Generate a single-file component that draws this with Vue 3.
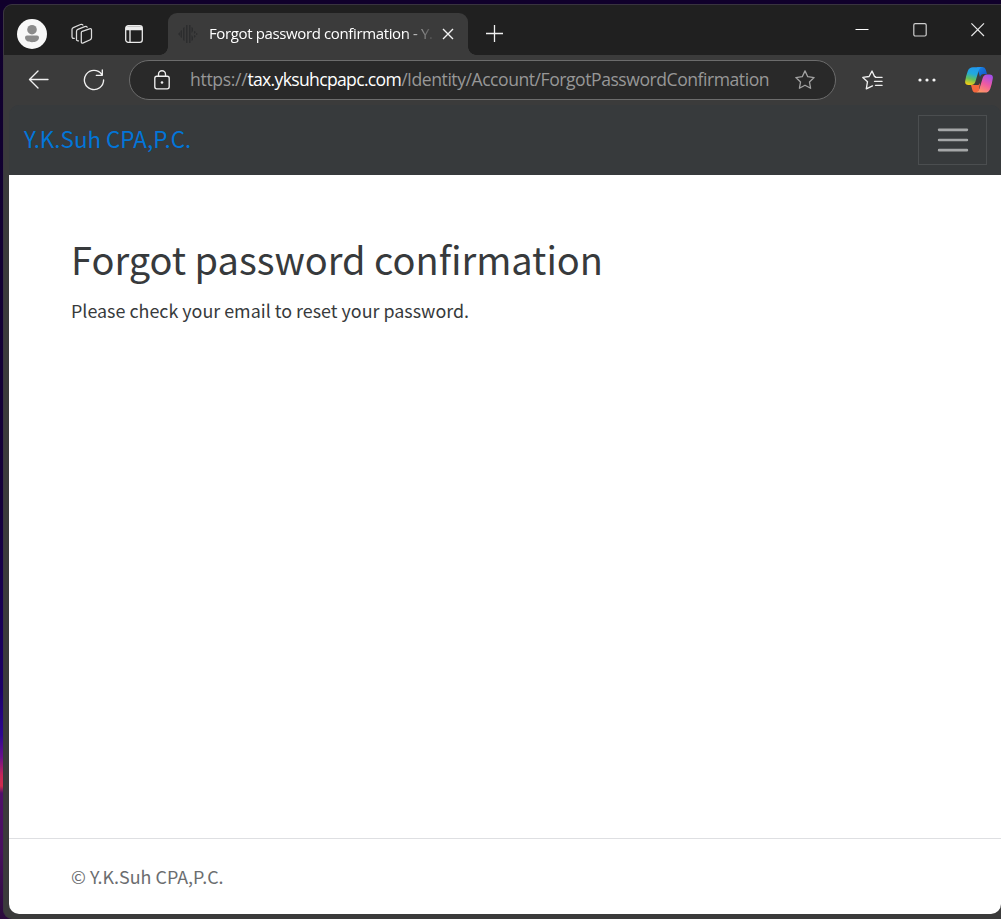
<script setup>
const title = 'Forgot password confirmation'
const company = 'Y.K.Suh CPA,P.C.'
</script>

<template>
  <div class="desktop">
    <div class="window">
      <header class="tabs">
        <svg class="avatar" width="30" height="30" viewBox="0 0 30 30">
          <circle cx="15" cy="15" r="15" fill="#f8f8f8" />
          <circle cx="15" cy="10.7" r="4.8" fill="#8b8b8b" />
          <path d="M10 16.600h10a2 2 0 0 1 2 2c0 3-3 4.700-7 4.700s-7-1.700-7-4.700a2 2 0 0 1 2-2z" fill="#8b8b8b" />
        </svg>
        <svg class="workspaces" width="22" height="22" viewBox="0 0 22 22" fill="none" stroke="#dcdcdc" stroke-width="1.25" stroke-linejoin="round" stroke-linecap="round">
          <path d="M11.200 8.300 18.500 5.800q2-.6 2 1.200v7.800q0 1.400-1.200 1.900l-7 3.200q-2 .8-2-1.200V9.800q0-1.100.9-1.500z" />
          <path d="M7.500 17.800q-2 .3-2-1.400V8.500q0-1.600 1.400-2.200l6.800-2.700q1.800-.7 2.500.6" />
          <path d="M3.300 15.300q-2.300.4-2.300-1.500V6.600q0-1.400 1.300-2L9.500 1.500q1.700-.6 2.400.5" />
        </svg>
        <svg class="panel" width="18" height="18" viewBox="0 0 18 18" fill="none" stroke="#ececec" stroke-width="1.300">
          <rect x=".7" y=".7" width="16.600" height="16.600" rx="2.600" />
          <path d="M1 2.500h16M1 4h16" stroke-width="2.400" />
          <path d="M5 4v13" />
        </svg>
        <div class="tab">
          <svg class="favicon" width="20" height="20" viewBox="0 0 20 20" fill="#2c2d2e">
            <path d="M8 1h1.500v18H8zM11 1h1.500v18H11zM5 4l1.500-1v14L5 16zM13.500 3 15 4v3l-1.500 2zM13.500 11 15 13v3l-1.500 1zM0 10l2-2v4zM2.500 7 4 6v8l-1.500-1zM16 7l2 1-2 2zM16 11l2 1-2 2zM18 9l2 1-2 1z" />
          </svg>
          <span class="tab-title">{{ title }} - Y.</span>
          <svg class="tab-close" width="12" height="12" viewBox="0 0 12 12" stroke="#f4f4f4" stroke-width="1.350"><path d="M1 1l10 10M11 1 1 11" /></svg>
        </div>
        <svg class="new-tab" width="18" height="18" viewBox="0 0 18 18" stroke="#f0f0f0" stroke-width="1.300"><path d="M8.500 0v17M0 8.500h17" /></svg>
        <div class="controls">
          <svg width="14" height="14" viewBox="0 0 14 14" stroke="#fff"><path d="M.5 6.500h13" /></svg>
          <svg width="14" height="14" viewBox="0 0 14 14" fill="none" stroke="#cfcfcf" stroke-width="1.200"><rect x=".8" y=".6" width="12.400" height="12.400" rx="1.500" /></svg>
          <svg width="14" height="14" viewBox="0 0 14 14" stroke="#e4e4e4" stroke-width="1.200"><path d="M.4.4l12.600 12.600M13 .4.4 13" /></svg>
        </div>
      </header>

      <div class="toolbar">
        <svg class="back" width="21" height="20" viewBox="0 0 21 20" fill="none" stroke="#f0f0f0" stroke-width="1.350" stroke-linecap="round" stroke-linejoin="round"><path d="M10 1 1.500 9.500l8.500 8.500M1.500 9.500H20" /></svg>
        <svg class="reload" width="22" height="22" viewBox="0 0 22 22" fill="none" stroke="#f0f0f0" stroke-width="1.350" stroke-linecap="round" stroke-linejoin="round"><path d="M18.700 5.300A9.600 9.600 0 1 0 20.600 11M19.300 1v5.300h-6" /></svg>
        <div class="address">
          <svg class="lock" width="16" height="20" viewBox="0 0 16 20" fill="none" stroke="#efefef" stroke-width="1.350"><rect x=".8" y="6.200" width="14.400" height="12.600" rx="2" /><path d="M4.500 6V4.200a3.500 3.500 0 0 1 7 0V6" /><circle cx="8" cy="12.500" r="1.300" fill="#efefef" stroke="none" /></svg>
          <span class="url">https://<b>tax.yksuhcpapc.com</b><span class="path">/Identity/Account/ForgotPasswordConfirmation</span></span>
          <svg class="star" width="20" height="20" viewBox="0 0 20 20" fill="none" stroke="#a2a2a2" stroke-width="1.300" stroke-linejoin="round"><path d="m10 .9 2.750 5.800 6.350.85-4.650 4.400 1.150 6.350L10 15.250 4.400 18.300l1.150-6.350L.9 7.550l6.350-.85z" /></svg>
        </div>
        <svg class="favorites" width="21" height="20" viewBox="0 0 21 20" fill="none" stroke="#eee" stroke-width="1.350" stroke-linejoin="round" stroke-linecap="round"><path d="M13.400 6.700l-.8-.1L10 1 7.100 6.500.8 7.400l4.700 4.300-1.200 7.200 6.200-3M13.500 7.300h6.600M12.500 11.300h7.600M13.500 15.300h6.600" /></svg>
        <svg class="more" width="18" height="4" viewBox="0 0 18 4" fill="#f4f4f4"><circle cx="2" cy="2" r="1.600" /><circle cx="9" cy="2" r="1.600" /><circle cx="16" cy="2" r="1.600" /></svg>
        <svg class="copilot" width="28" height="26" viewBox="0 0 28 26">
          <defs>
            <linearGradient id="cool" x1=".6" y1="0" x2=".35" y2="1"><stop offset="0" stop-color="#2198ee" /><stop offset=".38" stop-color="#22a9dc" /><stop offset=".68" stop-color="#62bf5c" /><stop offset="1" stop-color="#f2cc14" /></linearGradient>
            <linearGradient id="warm" x1=".7" y1="0" x2=".25" y2="1"><stop offset="0" stop-color="#a44eea" /><stop offset=".5" stop-color="#f05ba1" /><stop offset="1" stop-color="#ff9a62" /></linearGradient>
            <linearGradient id="fold" x1="0" y1="0" x2="1" y2="1"><stop offset="0" stop-color="#1788e8" /><stop offset="1" stop-color="#1551c5" /></linearGradient>
          </defs>
          <path d="M12 0h5.500q2.500 0 3.300 2.700L22 7h-3.500q-2.500 0-3.500 3z" fill="url(#fold)" />
          <path d="M6 18h7.500l1.500-2-1 7q-.6 2.600-3 2.600-3 0-3.800-3.200z" fill="#f4673d" />
          <path d="M8 .3h9q-2.500.4-3.500 4L10.300 15q-1 3-4.200 3H3.500Q-.4 18 .2 14q.7-5 2.600-10 1.500-3.700 5.200-3.700z" fill="url(#cool)" />
          <path d="M20 25.600h-9q2.500-.4 3.500-4L17.700 11q1-3.500 4.200-3.500h2.600q3.900 0 3.300 4-.7 5-2.600 10.400-1.500 3.700-5.200 3.700z" fill="url(#warm)" />
        </svg>
      </div>

      <div class="page">
        <nav class="navbar">
          <a class="brand">{{ company }}</a>
          <button class="toggler" aria-label="Toggle navigation">
            <svg width="38" height="38" viewBox="0 0 30 30" fill="none" stroke="#a5a7a8" stroke-linecap="round" stroke-width="2"><path d="M4 7h22M4 15h22M4 23h22" /></svg>
          </button>
        </nav>
        <main class="content">
          <h1>{{ title }}</h1>
          <p>Please check your email to reset your password.</p>
        </main>
        <footer class="footer">© {{ company }}</footer>
      </div>
    </div>
  </div>
</template>

<style>
body { margin: 0; background: #fff; overflow: hidden; }
</style>

<style scoped>
* { box-sizing: border-box; }
svg { display: block; flex: none; }
.desktop {
  width: 1001px;
  height: 919px;
  padding: 4px 0 0 3px;
  overflow: hidden;
  background:
    linear-gradient(#10002b, #10002b) 0 0 / 100% 4px no-repeat,
    linear-gradient(#10002c 0, #14003a 500px, #1b0068 690px, #2c0790 735px, #68108c 757px, #c42658 775px, #d12d4c 786px, #50106a 793px, #48105f 850px, #2b0b3c 919px);
}
.window {
  height: 915px;
  display: flex;
  flex-direction: column;
  border-radius: 9px 0 0 9px;
  border-top: 1px solid #39343f;
  border-left: 1px solid #3b373f;
  background: #3b3b3b;
  overflow: hidden;
}
.tabs {
  height: 50px;
  flex: none;
  display: flex;
  align-items: center;
  background: #202020;
  font-family: "Open Sans", "Noto Sans", sans-serif;
}
.avatar { margin: 8px 0 0 13px; }
.workspaces { margin: 8px 0 0 24px; }
.panel { margin: 8px 0 0 32px; }
.tab {
  position: relative;
  width: 300px;
  height: 42px;
  margin: 8px 0 0 25px;
  display: flex;
  align-items: center;
  border-radius: 9px 9px 0 0;
  background: #3b3b3b;
}
.tab::before, .tab::after {
  content: "";
  position: absolute;
  bottom: 0;
  width: 8px;
  height: 8px;
}
.tab::before { left: -8px; background: radial-gradient(circle at 0 0, #202020 7.500px, #3b3b3b 8px); }
.tab::after { right: -8px; background: radial-gradient(circle at 100% 0, #202020 7.500px, #3b3b3b 8px); }
.favicon { margin-left: 10px; }
.tab-title {
  width: 223px;
  margin-left: 11px;
  padding-bottom: 2px;
  font-size: 15px;
  letter-spacing: -0.37px;
  line-height: 24px;
  white-space: nowrap;
  overflow: hidden;
  color: #fff;
  mask-image: linear-gradient(90deg, #000 196px, transparent 226px);
}
.tab-close { margin-left: 10px; }
.new-tab { margin: 8px 0 0 18px; }
.controls { display: flex; gap: 44px; margin-left: auto; padding-right: 16px; }
.toolbar {
  height: 50px;
  flex: none;
  display: flex;
  align-items: center;
  font-family: "Open Sans", "Noto Sans", sans-serif;
}
.back { margin-left: 24px; }
.reload { margin-left: 34px; }
.address {
  width: 707px;
  height: 40px;
  margin-left: 24px;
  display: flex;
  align-items: center;
  border: 1px solid #6c6c6c;
  border-radius: 20px;
  background: #292929;
}
.lock { margin-left: 24px; }
.url {
  width: 605px;
  margin-left: 20px;
  padding-bottom: 2px;
  font-size: 17.600px;
  line-height: 26px;
  letter-spacing: -0.33px;
  white-space: nowrap;
  color: #979797;
}
.url b { font-weight: 400; letter-spacing: -0.68px; color: #fff; }
.path { letter-spacing: -0.470px; }
.favorites { margin-left: 26px; }
.more { margin-left: 35px; }
.copilot { margin-left: 29px; }
.page {
  height: 809px;
  flex: none;
  margin-left: 5px;
  display: flex;
  flex-direction: column;
  border-radius: 10px;
  overflow: hidden;
  background: linear-gradient(#373a3c 50px, #fff 50px);
  font-family: "Noto Sans CJK SC", sans-serif;
  color: #373a3c;
}
.navbar {
  height: 70px;
  flex: none;
  display: flex;
  align-items: center;
  justify-content: space-between;
  padding: 0 14px 0 15px;
  background: #373a3c;
}
.brand { padding-bottom: 4px; font-size: 22.400px; line-height: 30px; color: #0275d8; }
.toggler {
  width: 69px;
  height: 50px;
  padding: 0;
  display: grid;
  place-items: center;
  border: 1px solid #4b4e50;
  background: none;
}
.content { flex: 1; padding: 59px 62px 0; }
h1 { margin: 0; font-size: 37.960px; font-weight: 400; line-height: 50px; white-space: nowrap; }
p { margin: 12px 0 0; font-size: 17.900px; line-height: 28px; }
.footer {
  height: 76px;
  flex: none;
  padding-left: 62px;
  border-top: 1px solid #dedfe2;
  font-size: 17.900px;
  line-height: 74px;
  color: #6b6d6f;
}
</style>
